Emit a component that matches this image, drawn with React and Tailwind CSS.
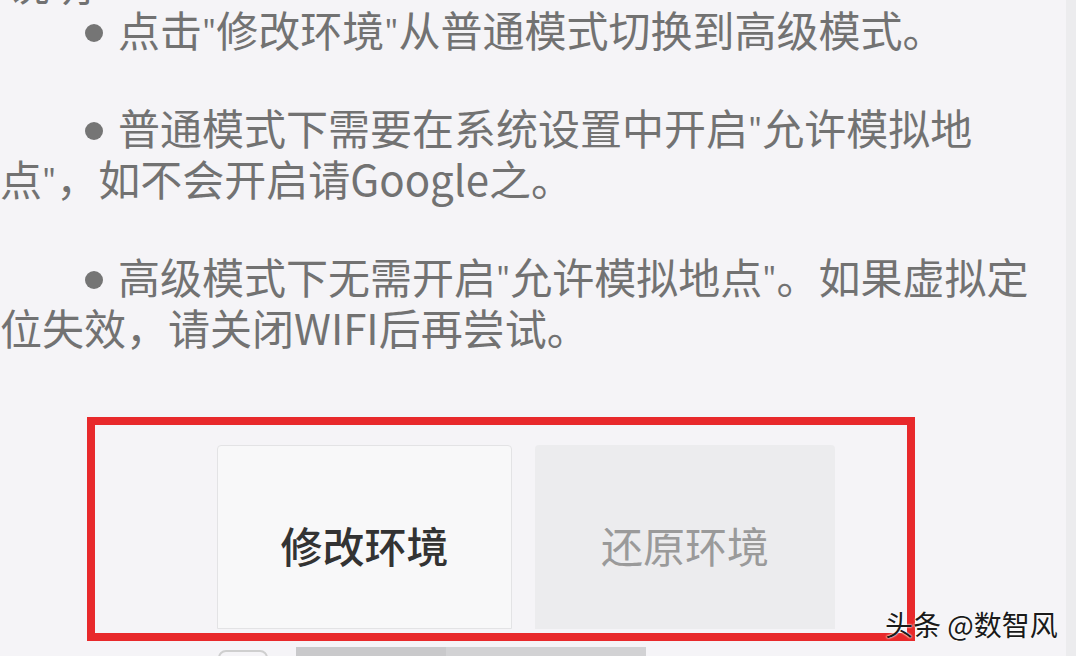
import { Fragment } from 'react'

const Bullet = () => (
  <span className="inline-block w-[18px] h-[18px] rounded-full bg-[#757575] align-middle mr-[15px] -mt-[6px]" />
)

// quotes in the original are narrow
const Quoted = ({ text }) =>
  text.split('"').map((part, i) => (
    <Fragment key={i}>
      {i > 0 && <span className="text-[30px] leading-none align-[5px]">"</span>}
      {part}
    </Fragment>
  ))

const tips = [
  '点击"修改环境"从普通模式切换到高级模式。',
  '普通模式下需要在系统设置中开启"允许模拟地点"，如不会开启请Google之。',
  '高级模式下无需开启"允许模拟地点"。如果虚拟定位失效，请关闭WIFI后再尝试。',
]

export default function App() {
  return (
    <div
      className="w-[1076px] h-[656px] overflow-hidden flex bg-[#f5f4f7]"
      style={{ fontFamily: '"Noto Sans CJK SC", "Noto Sans", sans-serif' }}
    >
      <div className="w-[1066px] flex flex-col">
        <div className="w-[1040px] text-[42px] leading-[51px] text-[#727272]">
          <p className="-mt-[43px] -mb-[5px] pl-[8px]">说明</p>
          {tips.map((tip, i) => (
            <p key={tip} className={i === 0 ? 'indent-[85px]' : 'indent-[85px] mt-[47px]'}>
              <Bullet />
              <Quoted text={tip} />
            </p>
          ))}
        </div>

        <div className="mt-[48px] h-px bg-[#e6e5e8]" />

        <div className="pt-[17px]">
          <div className="ml-[87px] w-[828px] h-[224px] border-8 border-[#e8292b] pt-[20px] pl-[122px] flex gap-[23px]">
            <button className="w-[295px] h-[184px] pt-[14px] bg-[#f8f8f9] border border-[#e3e3e5] rounded-t-[4px] text-[42px] font-medium text-[#333333]">
              修改环境
            </button>
            <button className="w-[300px] h-[184px] pt-[14px] bg-[#ececee] rounded-t-[4px] text-[42px] text-[#9a9a9a]">
              还原环境
            </button>
          </div>
          <div className="mt-[6px] flex items-start">
            <div className="ml-[218px] mt-[3px] w-[50px] h-[20px] rounded-t-[8px] border-2 border-[#cfcfcf]" />
            <div className="ml-[28px] w-[150px] h-[20px] bg-[#c9c9cb]" />
            <div className="w-[200px] h-[20px] bg-[#d2d2d4]" />
          </div>
        </div>
      </div>
      <div className="flex-1 bg-[#ececee]" />

      <div
        className="absolute left-[885px] top-[606px] text-[28px] leading-[36px] text-[#1a1a1a]"
        style={{ textShadow: '0 0 2px #fff, 0 0 2px #fff' }}
      >
        头条 @数智风
      </div>
    </div>
  )
}
